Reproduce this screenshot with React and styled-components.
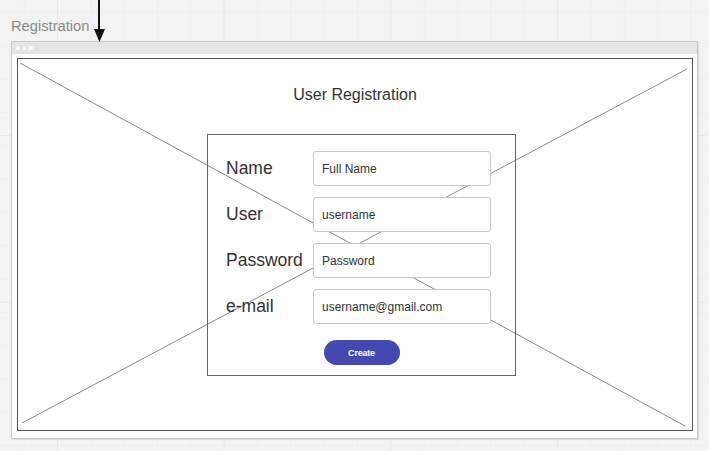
import React from 'react';
import styled, { createGlobalStyle } from 'styled-components';

const GlobalStyle = createGlobalStyle`
  html, body {
    margin: 0;
    padding: 0;
  }
  body {
    font-family: "Liberation Sans", Arial, sans-serif;
    background-color: #f3f3f3;
    background-image:
      linear-gradient(to right, #e8e8e8 1px, transparent 1px),
      linear-gradient(to bottom, #e8e8e8 1px, transparent 1px),
      linear-gradient(to right, #eeeeee 1px, transparent 1px),
      linear-gradient(to bottom, #eeeeee 1px, transparent 1px);
    background-size: 166.67px 166.67px, 166.67px 166.67px, 33.33px 33.33px, 33.33px 33.33px;
    background-position: 57px 0, 0 135px, 57px 0, 0 12px;
  }
`;

const Page = styled.div`
  position: relative;
  width: 709px;
  height: 451px;
  padding-left: 11px;
  box-sizing: border-box;
  overflow: hidden;
`;

const Caption = styled.div`
  padding-top: 17px;
  font-size: 14.7px;
  line-height: 18px;
  color: #8a8a8a;
`;

const Arrow = styled.svg`
  position: absolute;
  left: 93px;
  top: 0;
`;

const Frame = styled.div`
  margin-top: 6px;
  width: 687px;
  height: 398px;
  box-sizing: border-box;
  border: 1px solid #c9c9c9;
  box-shadow: 1px 1px 0 #dedede;
  background: #fff;
  display: flex;
  flex-direction: column;
`;

const TitleBar = styled.div`
  height: 12px;
  background: #e5e5e5;
  display: flex;
  align-items: center;
  gap: 3px;
  padding-left: 4px;
`;

const Dot = styled.span`
  width: 3.5px;
  height: 3.5px;
  border-radius: 50%;
  background: #fbfbfb;
`;

const FrameBody = styled.div`
  flex: 1;
  padding: 4px 4px 7px 5px;
  display: flex;
`;

const Wire = styled.div`
  position: relative;
  flex: 1;
  border: 1px solid #555;
  display: flex;
  flex-direction: column;
  align-items: center;
`;

const Cross = styled.svg`
  position: absolute;
  inset: 0;
  width: 100%;
  height: 100%;
`;

const Title = styled.div`
  position: relative;
  margin-top: 27px;
  font-size: 16px;
  line-height: 18px;
  color: #333;
`;

const FormBox = styled.div`
  position: relative;
  align-self: flex-start;
  margin-left: 189px;
  margin-top: 30px;
  width: 309px;
  height: 242px;
  box-sizing: border-box;
  border: 1px solid #666;
  padding: 16px 0 0 18px;
  display: flex;
  flex-direction: column;
`;

const Rows = styled.div`
  display: grid;
  grid-template-columns: 87px 178px;
  row-gap: 11px;
`;

const Label = styled.div`
  height: 35px;
  line-height: 35px;
  font-size: 17.5px;
  color: #333;
`;

const Field = styled.div`
  height: 35px;
  box-sizing: border-box;
  border: 1px solid #c8c8c8;
  border-radius: 3px;
  background: #fff;
  padding-left: 8px;
  display: flex;
  align-items: center;
  font-size: 12px;
  color: #333;
`;

const Button = styled.div`
  align-self: center;
  margin: 16px 0 0 -18px;
  width: 76px;
  height: 25px;
  border-radius: 13px;
  background: #4349b1;
  color: #fff;
  font-size: 9px;
  font-weight: bold;
  letter-spacing: -0.2px;
  display: flex;
  align-items: center;
  justify-content: center;
`;

const fields = [
  { label: 'Name', value: 'Full Name' },
  { label: 'User', value: 'username' },
  { label: 'Password', value: 'Password' },
  { label: 'e-mail', value: 'username@gmail.com' },
];

const App = () => (
  <>
    <GlobalStyle />
    <Page>
      <Caption>Registration</Caption>
      <Frame>
        <TitleBar>
          <Dot />
          <Dot />
          <Dot />
        </TitleBar>
        <FrameBody>
          <Wire>
            <Cross viewBox="0 0 674 371" preserveAspectRatio="none">
              <line x1="2" y1="4" x2="667" y2="367" stroke="#8a8a8a" strokeWidth="1" />
              <line x1="669" y1="10" x2="4" y2="364" stroke="#8a8a8a" strokeWidth="1" />
            </Cross>
            <Title>User Registration</Title>
            <FormBox>
              <Rows>
                {fields.map((f) => (
                  <React.Fragment key={f.label}>
                    <Label>{f.label}</Label>
                    <Field>{f.value}</Field>
                  </React.Fragment>
                ))}
              </Rows>
              <Button>Create</Button>
            </FormBox>
          </Wire>
        </FrameBody>
      </Frame>
      <Arrow width="14" height="42" viewBox="0 0 14 42">
        <line x1="6" y1="0" x2="6" y2="31" stroke="#111" strokeWidth="2" />
        <polygon points="1,29 12,29 6.5,42" fill="#111" />
      </Arrow>
    </Page>
  </>
);

export default App;
